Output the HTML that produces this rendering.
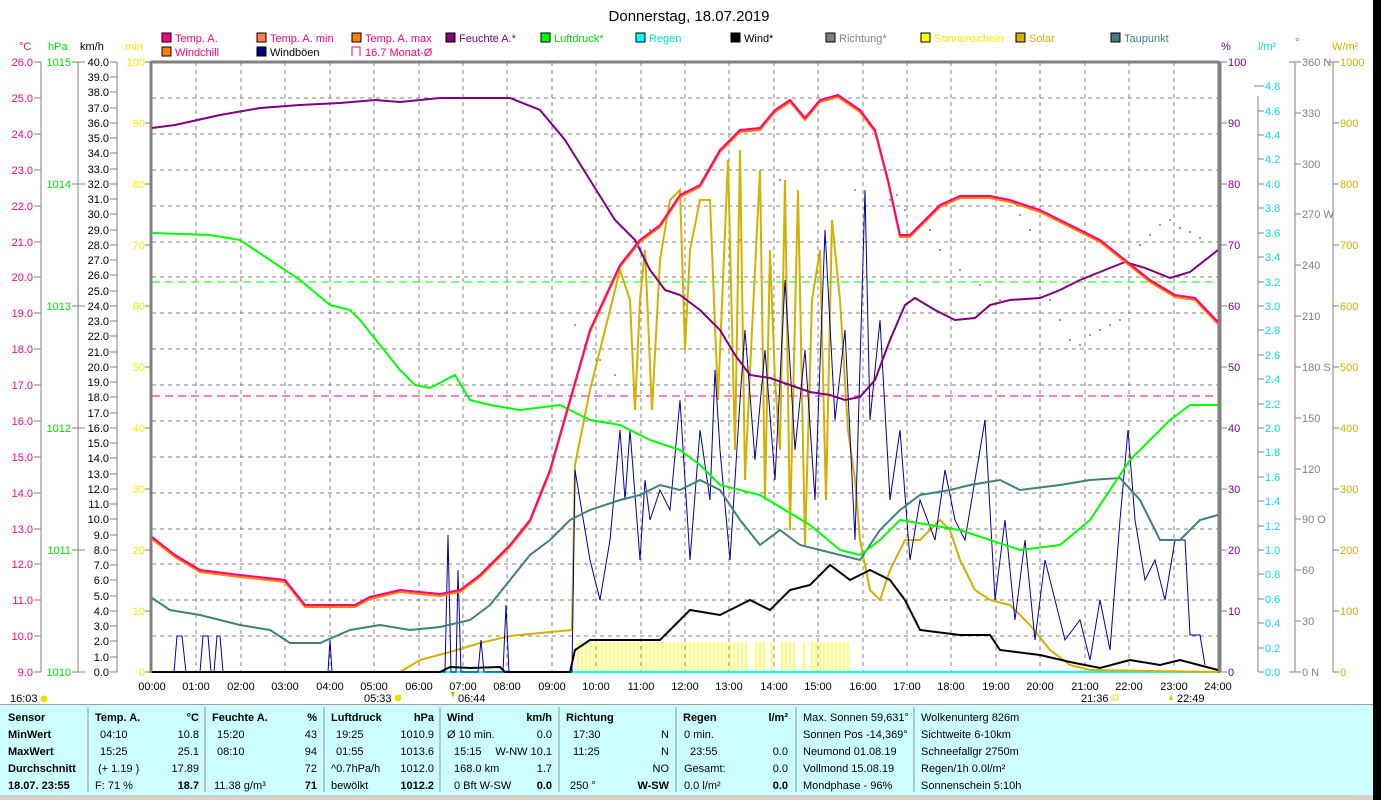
<!DOCTYPE html>
<html><head><meta charset="utf-8"><style>
html,body{margin:0;padding:0;background:#fff;}
svg{display:block;font-family:"Liberation Sans",sans-serif;}
</style></head><body>
<svg width="1381" height="800" viewBox="0 0 1381 800" xmlns="http://www.w3.org/2000/svg">
<rect width="1381" height="800" fill="#fff"/>
<rect x="1373" y="0" width="8" height="800" fill="#000"/>
<text x="689" y="21" font-size="15" text-anchor="middle" fill="#000">Donnerstag, 18.07.2019</text>
<!-- legend -->
<g font-size="11">
<rect x="162" y="33" width="9" height="9" fill="#ff0080" stroke="#000"/><text x="175" y="42" fill="#ff0080">Temp. A.</text>
<rect x="162" y="47" width="9" height="9" fill="#ff8000" stroke="#000"/><text x="175" y="56" fill="#ff0080">Windchill</text>
<rect x="257" y="33" width="9" height="9" fill="#ff8040" stroke="#000"/><text x="270" y="42" fill="#ff0080">Temp. A. min</text>
<rect x="257" y="47" width="9" height="9" fill="#000080" stroke="#000"/><text x="270" y="56" fill="#000">Windböen</text>
<rect x="352" y="33" width="9" height="9" fill="#ff8000" stroke="#000"/><text x="365" y="42" fill="#ff0080">Temp. A. max</text>
<path d="M352 56V47h8v9" fill="none" stroke="#ff0080"/><text x="365" y="56" fill="#ff0080">16.7 Monat-Ø</text>
<rect x="446" y="33" width="9" height="9" fill="#800080" stroke="#000"/><text x="459" y="42" fill="#800080">Feuchte A.*</text>
<rect x="541" y="33" width="9" height="9" fill="#00ff00" stroke="#000"/><text x="554" y="42" fill="#00dd00">Luftdruck*</text>
<rect x="636" y="33" width="9" height="9" fill="#00ffff" stroke="#000"/><text x="649" y="42" fill="#00e0e0">Regen</text>
<rect x="731" y="33" width="9" height="9" fill="#000" stroke="#000"/><text x="744" y="42" fill="#000">Wind*</text>
<rect x="826" y="33" width="9" height="9" fill="#808080" stroke="#000"/><text x="839" y="42" fill="#808080">Richtung*</text>
<rect x="921" y="33" width="9" height="9" fill="#ffff00" stroke="#000"/><text x="934" y="42" fill="#f0f000">Sonnenschein</text>
<rect x="1016" y="33" width="9" height="9" fill="#d4b000" stroke="#000"/><text x="1029" y="42" fill="#d4b000">Solar</text>
<rect x="1111" y="33" width="9" height="9" fill="#408080" stroke="#000"/><text x="1124" y="42" fill="#408080">Taupunkt</text>
</g>
<!-- unit labels -->
<g font-size="11">
<text x="19" y="50" fill="#ff0080">°C</text><text x="48" y="50" fill="#00dd00">hPa</text><text x="80" y="50" fill="#000">km/h</text><text x="125" y="50" fill="#f0f000">min</text>
<text x="1221" y="50" fill="#800080">%</text><text x="1258" y="50" fill="#00e0e0">l/m²</text><text x="1295" y="46" fill="#808080">°</text><text x="1332" y="50" fill="#d4b000">W/m²</text>
</g>
<!-- grid -->
<g stroke="#808080" stroke-dasharray="4,4" stroke-width="1">
<path d="M196 62V672M241 62V672M285 62V672M330 62V672M374 62V672M419 62V672M463 62V672M507 62V672M552 62V672M596 62V672M641 62V672M685 62V672M729 62V672M774 62V672M818 62V672M863 62V672M907 62V672M951 62V672M996 62V672M1040 62V672M1085 62V672M1129 62V672M1174 62V672"/>
<path d="M152 98H1218M152 134H1218M152 170H1218M152 206H1218M152 242H1218M152 277H1218M152 313H1218M152 349H1218M152 385H1218M152 421H1218M152 457H1218M152 493H1218M152 529H1218M152 564H1218M152 600H1218M152 636H1218"/>
</g>
<path d="M151 62H1219M151 61V673M1219 61V673" stroke="#808080" stroke-width="3" fill="none"/>
<!-- left axes -->
<g stroke="#808080" fill="none">
<path d="M41 62V672M78 62V672M117 62V672"/>
<path d="M34 62H41M34 98H41M34 134H41M34 170H41M34 206H41M34 242H41M34 277H41M34 313H41M34 349H41M34 385H41M34 421H41M34 457H41M34 493H41M34 529H41M34 564H41M34 600H41M34 636H41M34 672H41"/>
<path d="M72 62H85M72 184H85M72 306H85M72 428H85M72 550H85M72 672H85"/>
<path d="M110 62H117M110 77H117M110 92H117M110 108H117M110 123H117M110 138H117M110 153H117M110 169H117M110 184H117M110 199H117M110 214H117M110 230H117M110 245H117M110 260H117M110 275H117M110 291H117M110 306H117M110 321H117M110 336H117M110 352H117M110 367H117M110 382H117M110 397H117M110 413H117M110 428H117M110 443H117M110 458H117M110 474H117M110 489H117M110 504H117M110 519H117M110 535H117M110 550H117M110 565H117M110 580H117M110 596H117M110 611H117M110 626H117M110 641H117M110 657H117M110 672H117"/>
<path d="M145 62H151M145 123H151M145 184H151M145 245H151M145 306H151M145 367H151M145 428H151M145 489H151M145 550H151M145 611H151M145 672H151"/>
</g>
<g font-size="11" fill="#ff0080" text-anchor="end">
<text x="33" y="66">26.0</text><text x="33" y="102">25.0</text><text x="33" y="138">24.0</text><text x="33" y="174">23.0</text><text x="33" y="210">22.0</text><text x="33" y="246">21.0</text><text x="33" y="281">20.0</text><text x="33" y="317">19.0</text><text x="33" y="353">18.0</text><text x="33" y="389">17.0</text><text x="33" y="425">16.0</text><text x="33" y="461">15.0</text><text x="33" y="497">14.0</text><text x="33" y="533">13.0</text><text x="33" y="568">12.0</text><text x="33" y="604">11.0</text><text x="33" y="640">10.0</text><text x="33" y="676">9.0</text>
</g>
<g font-size="11" fill="#00dd00" text-anchor="end">
<text x="71" y="66">1015</text><text x="71" y="188">1014</text><text x="71" y="310">1013</text><text x="71" y="432">1012</text><text x="71" y="554">1011</text><text x="71" y="676">1010</text>
</g>
<g font-size="11" fill="#000" text-anchor="end">
<text x="109" y="66">40.0</text><text x="109" y="81">39.0</text><text x="109" y="96">38.0</text><text x="109" y="112">37.0</text><text x="109" y="127">36.0</text><text x="109" y="142">35.0</text><text x="109" y="157">34.0</text><text x="109" y="173">33.0</text><text x="109" y="188">32.0</text><text x="109" y="203">31.0</text><text x="109" y="218">30.0</text><text x="109" y="234">29.0</text><text x="109" y="249">28.0</text><text x="109" y="264">27.0</text><text x="109" y="279">26.0</text><text x="109" y="295">25.0</text><text x="109" y="310">24.0</text><text x="109" y="325">23.0</text><text x="109" y="340">22.0</text><text x="109" y="356">21.0</text><text x="109" y="371">20.0</text><text x="109" y="386">19.0</text><text x="109" y="401">18.0</text><text x="109" y="417">17.0</text><text x="109" y="432">16.0</text><text x="109" y="447">15.0</text><text x="109" y="462">14.0</text><text x="109" y="478">13.0</text><text x="109" y="493">12.0</text><text x="109" y="508">11.0</text><text x="109" y="523">10.0</text><text x="109" y="539">9.0</text><text x="109" y="554">8.0</text><text x="109" y="569">7.0</text><text x="109" y="584">6.0</text><text x="109" y="600">5.0</text><text x="109" y="615">4.0</text><text x="109" y="630">3.0</text><text x="109" y="645">2.0</text><text x="109" y="661">1.0</text><text x="109" y="676">0.0</text>
</g>
<g font-size="11" fill="#f0f000" text-anchor="end">
<text x="145" y="66">100</text><text x="145" y="127">90</text><text x="145" y="188">80</text><text x="145" y="249">70</text><text x="145" y="310">60</text><text x="145" y="371">50</text><text x="145" y="432">40</text><text x="145" y="493">30</text><text x="145" y="554">20</text><text x="145" y="615">10</text><text x="145" y="676">0</text>
</g>
<!-- right axes -->
<g stroke="#808080" fill="none">
<path d="M1221 62V672M1258 96V672M1295 62V672M1333 62V672"/>
<path d="M1221 62H1227M1221 123H1227M1221 184H1227M1221 245H1227M1221 306H1227M1221 367H1227M1221 428H1227M1221 489H1227M1221 550H1227M1221 611H1227M1221 672H1227"/>
<path d="M1254 86H1264M1258 111H1264M1258 135H1264M1258 159H1264M1258 184H1264M1258 208H1264M1258 233H1264M1258 257H1264M1258 282H1264M1258 306H1264M1258 330H1264M1258 355H1264M1258 379H1264M1258 404H1264M1258 428H1264M1258 452H1264M1258 477H1264M1258 501H1264M1258 526H1264M1258 550H1264M1258 574H1264M1258 599H1264M1258 623H1264M1258 648H1264M1258 672H1264"/>
<path d="M1289 62H1301M1295 113H1301M1295 164H1301M1295 214H1301M1295 265H1301M1295 316H1301M1295 367H1301M1295 418H1301M1295 469H1301M1295 519H1301M1295 570H1301M1295 621H1301M1289 672H1301"/>
<path d="M1327 62H1339M1333 123H1339M1333 184H1339M1333 245H1339M1333 306H1339M1333 367H1339M1333 428H1339M1333 489H1339M1333 550H1339M1333 611H1339M1333 672H1339"/>
</g>
<g font-size="11" fill="#800080"><text x="1228" y="66">100</text><text x="1228" y="127">90</text><text x="1228" y="188">80</text><text x="1228" y="249">70</text><text x="1228" y="310">60</text><text x="1228" y="371">50</text><text x="1228" y="432">40</text><text x="1228" y="493">30</text><text x="1228" y="554">20</text><text x="1228" y="615">10</text><text x="1228" y="676">0</text></g>
<g font-size="11" fill="#00e0e0"><text x="1265" y="90">4.8</text><text x="1265" y="115">4.6</text><text x="1265" y="139">4.4</text><text x="1265" y="163">4.2</text><text x="1265" y="188">4.0</text><text x="1265" y="212">3.8</text><text x="1265" y="237">3.6</text><text x="1265" y="261">3.4</text><text x="1265" y="286">3.2</text><text x="1265" y="310">3.0</text><text x="1265" y="334">2.8</text><text x="1265" y="359">2.6</text><text x="1265" y="383">2.4</text><text x="1265" y="408">2.2</text><text x="1265" y="432">2.0</text><text x="1265" y="456">1.8</text><text x="1265" y="481">1.6</text><text x="1265" y="505">1.4</text><text x="1265" y="530">1.2</text><text x="1265" y="554">1.0</text><text x="1265" y="578">0.8</text><text x="1265" y="603">0.6</text><text x="1265" y="627">0.4</text><text x="1265" y="652">0.2</text><text x="1265" y="676">0.0</text></g>
<g font-size="11" fill="#808080"><text x="1302" y="66">360 N</text><text x="1302" y="117">330</text><text x="1302" y="168">300</text><text x="1302" y="218">270 W</text><text x="1302" y="269">240</text><text x="1302" y="320">210</text><text x="1302" y="371">180 S</text><text x="1302" y="422">150</text><text x="1302" y="473">120</text><text x="1302" y="523">90 O</text><text x="1302" y="574">60</text><text x="1302" y="625">30</text><text x="1302" y="676">0 N</text></g>
<g font-size="11" fill="#d4b000"><text x="1340" y="66">1000</text><text x="1340" y="127">900</text><text x="1340" y="188">800</text><text x="1340" y="249">700</text><text x="1340" y="310">600</text><text x="1340" y="371">500</text><text x="1340" y="432">400</text><text x="1340" y="493">300</text><text x="1340" y="554">200</text><text x="1340" y="615">100</text><text x="1340" y="676">0</text></g>
<!-- x labels -->
<g font-size="11" fill="#000" text-anchor="middle">
<text x="152" y="690">00:00</text><text x="196" y="690">01:00</text><text x="241" y="690">02:00</text><text x="285" y="690">03:00</text><text x="330" y="690">04:00</text><text x="374" y="690">05:00</text><text x="419" y="690">06:00</text><text x="463" y="690">07:00</text><text x="507" y="690">08:00</text><text x="552" y="690">09:00</text><text x="596" y="690">10:00</text><text x="641" y="690">11:00</text><text x="685" y="690">12:00</text><text x="729" y="690">13:00</text><text x="774" y="690">14:00</text><text x="818" y="690">15:00</text><text x="863" y="690">16:00</text><text x="907" y="690">17:00</text><text x="951" y="690">18:00</text><text x="996" y="690">19:00</text><text x="1040" y="690">20:00</text><text x="1085" y="690">21:00</text><text x="1129" y="690">22:00</text><text x="1174" y="690">23:00</text><text x="1218" y="690">24:00</text>
</g>
<g font-size="11" fill="#000">
<text x="10" y="702">16:03</text><circle cx="44" cy="699" r="3.5" fill="#f0e000"/>
<text x="364" y="702">05:33</text><circle cx="398" cy="698" r="3.5" fill="#f0e000"/>
<text x="458" y="702">06:44</text><path d="M451 692l2 6 2-6z" fill="#d4b000"/>
<text x="1081" y="702">21:36</text><rect x="1113" y="695" width="5" height="5" fill="none" stroke="#f0e000"/>
<text x="1177" y="702">22:49</text><path d="M1169 700l2-6 2 6z" fill="#f0c000"/>
</g>
<!-- reference lines -->
<path d="M152 396H1218" stroke="#ff0080" stroke-dasharray="8,5"/>
<path d="M152 282H1218" stroke="#00ff00" stroke-dasharray="8,5"/>
<!-- sunshine bars -->
<g stroke="#ffff00" stroke-width="1.2">
<path d="M578 642V672M582 642V672M586 642V672M590 642V672M594 642V672M598 642V672M602 642V672M606 642V672M610 642V672M614 642V672M618 642V672M622 642V672M626 642V672M630 642V672M634 642V672M638 642V672M642 642V672M646 642V672M650 642V672M654 642V672M658 642V672M662 642V672M666 642V672M670 642V672M674 642V672M678 642V672M682 642V672M686 642V672M690 642V672M694 642V672M698 642V672M702 642V672M706 642V672M710 642V672M714 642V672M718 642V672M722 642V672M726 642V672M730 642V672M734 642V672M738 642V672M742 642V672M746 642V672M756 642V672M760 642V672M764 642V672M772 642V672M782 642V672M786 642V672M790 642V672M794 642V672M804 642V672M812 642V672M816 642V672M820 642V672M824 642V672M828 642V672M832 642V672M836 642V672M840 642V672M844 642V672M848 642V672"/>
</g>
<!-- rain baseline -->
<path d="M152 672H1218" stroke="#00ffff" stroke-width="2"/>
<!-- direction dots -->
<g fill="#808080">
<circle cx="575" cy="325" r="1"/><circle cx="585" cy="345" r="1"/><circle cx="600" cy="360" r="1"/><circle cx="615" cy="375" r="1"/><circle cx="640" cy="250" r="1"/><circle cx="650" cy="230" r="1"/><circle cx="660" cy="225" r="1"/><circle cx="740" cy="240" r="1"/><circle cx="760" cy="200" r="1"/><circle cx="780" cy="180" r="1"/><circle cx="855" cy="190" r="1"/><circle cx="890" cy="200" r="1"/><circle cx="897" cy="195" r="1"/><circle cx="905" cy="210" r="1"/><circle cx="940" cy="250" r="1"/><circle cx="960" cy="270" r="1"/><circle cx="1020" cy="215" r="1"/><circle cx="1030" cy="230" r="1"/><circle cx="1050" cy="300" r="1"/><circle cx="1060" cy="320" r="1"/><circle cx="1070" cy="340" r="1"/><circle cx="1080" cy="345" r="1"/><circle cx="1090" cy="335" r="1"/><circle cx="1100" cy="330" r="1"/><circle cx="1110" cy="325" r="1"/><circle cx="1120" cy="320" r="1"/><circle cx="1140" cy="245" r="1"/><circle cx="1150" cy="235" r="1"/><circle cx="1160" cy="225" r="1"/><circle cx="1170" cy="220" r="1"/><circle cx="1180" cy="228" r="1"/><circle cx="1190" cy="232" r="1"/><circle cx="1200" cy="238" r="1"/><circle cx="930" cy="230" r="1"/><circle cx="980" cy="285" r="1"/><circle cx="1000" cy="300" r="1"/>
</g>
<!-- solar -->
<polyline fill="none" stroke="#d4b000" stroke-width="2" points="400,672 420,660 450,652 480,643 510,636 540,633 572,630 575,465 590,390 600,350 610,310 620,270 630,300 635,410 640,300 645,250 652,410 660,260 670,200 680,190 685,350 690,250 700,200 710,200 718,400 728,160 735,450 740,150 745,480 752,330 760,170 765,500 770,250 775,380 780,450 785,180 790,530 798,190 805,545 812,300 820,250 826,500 832,220 840,300 848,430 855,480 860,540 870,590 880,600 890,570 905,540 920,540 940,520 950,530 960,560 975,590 990,600 1010,605 1030,625 1050,650 1070,665 1090,670 1218,672"/>
<!-- windböen -->
<polyline fill="none" stroke="#0000a0" stroke-width="1" points="152,672 174,672 177,636 182,636 186,672 200,672 203,636 208,636 211,672 214,672 217,636 220,636 223,672 328,672 330,640 332,672 445,672 448,535 451,672 456,672 458,570 461,672 478,672 481,640 484,672 503,672 506,605 509,672 572,672 575,470 590,560 600,600 610,540 620,430 625,500 630,430 640,560 645,480 650,520 660,490 670,510 680,400 690,560 700,430 710,500 715,370 720,450 730,560 740,400 745,330 755,460 765,350 775,480 785,280 795,450 805,350 815,500 825,230 835,420 845,330 855,540 865,190 870,420 880,320 890,500 900,430 910,560 920,500 935,540 945,470 955,520 965,540 975,480 985,420 995,600 1005,520 1015,620 1025,540 1035,640 1045,560 1055,600 1065,640 1080,620 1090,660 1100,600 1110,650 1120,520 1128,430 1135,520 1145,580 1155,560 1165,600 1175,540 1185,540 1190,635 1200,635 1205,665"/>
<!-- wind -->
<polyline fill="none" stroke="#000" stroke-width="2" points="152,672 440,672 450,667 470,668 500,667 505,672 570,672 575,650 590,640 620,640 660,640 670,630 690,610 720,615 750,600 770,610 790,590 810,585 830,565 850,580 870,570 890,580 905,600 920,630 960,635 990,635 1000,650 1040,655 1070,662 1100,668 1130,660 1160,665 1180,660 1218,670"/>
<!-- taupunkt -->
<polyline fill="none" stroke="#408080" stroke-width="2" points="152,598 170,610 200,615 240,625 270,630 290,643 320,643 350,630 380,625 410,630 440,627 470,620 490,605 510,580 530,555 550,540 570,520 590,510 620,500 640,495 660,485 680,490 700,480 720,490 740,520 760,545 780,530 800,545 840,555 860,560 880,530 900,510 920,495 950,490 970,485 1000,480 1020,490 1060,485 1090,480 1120,478 1140,500 1160,540 1180,540 1200,520 1218,515"/>
<!-- pressure -->
<polyline fill="none" stroke="#00ff00" stroke-width="2" points="152,233 210,235 240,240 270,260 300,280 330,305 350,310 360,320 380,345 400,370 415,385 430,388 455,375 470,400 490,405 520,410 560,405 590,420 620,425 650,440 680,450 700,465 720,485 760,495 810,525 840,550 860,555 880,540 900,520 930,525 960,530 990,540 1020,550 1060,545 1090,520 1110,490 1130,460 1150,440 1170,420 1190,405 1218,405"/>
<!-- humidity -->
<polyline fill="none" stroke="#800080" stroke-width="2" points="152,128 175,125 220,115 260,108 300,105 340,103 375,100 400,102 440,98 510,98 540,110 565,140 590,180 615,220 635,240 650,270 665,290 680,295 700,310 720,330 735,355 750,375 770,378 790,385 810,392 830,395 845,400 860,397 875,380 890,340 905,305 915,298 935,310 955,320 975,318 990,305 1010,300 1040,298 1060,290 1080,280 1110,268 1125,262 1145,268 1170,278 1190,272 1218,250"/>
<!-- temp -->
<polyline fill="none" stroke="#ff8000" stroke-width="2" points="152,539 175,557 200,572 240,577 285,582 305,607 355,607 370,599 400,592 440,596 460,592 480,577 510,547 530,522 550,472 570,402 590,332 620,267 640,242 660,227 680,197 700,187 720,152 740,132 760,130 775,112 790,102 805,120 820,102 838,97 860,112 875,132 888,182 900,237 910,237 925,222 940,207 960,198 990,198 1010,202 1040,212 1070,227 1100,242 1125,262 1150,282 1175,297 1195,300 1218,324"/>
<polyline fill="none" stroke="#ff0080" stroke-width="2" points="152,537 175,555 200,570 240,575 285,580 305,605 355,605 370,597 400,590 440,594 460,590 480,575 510,545 530,520 550,470 570,400 590,330 620,265 640,240 660,225 680,195 700,185 720,150 740,130 760,128 775,110 790,100 805,118 820,100 838,95 860,110 875,130 888,180 900,235 910,235 925,220 940,205 960,196 990,196 1010,200 1040,210 1070,225 1100,240 1125,260 1150,280 1175,295 1195,298 1218,322"/>
<!-- bottom panel -->
<rect x="0" y="704" width="1373" height="91" fill="#ccffff"/>
<rect x="0" y="704" width="1373" height="1" fill="#a0a0a0"/>
<rect x="0" y="795" width="1373" height="5" fill="#d4d0c8"/>
<g stroke="#909090"><path d="M88 707V792M205 707V792M324 707V792M440 707V792M559 707V792M676 707V792M796 707V792M914 707V792"/></g>
<g font-size="11" fill="#000">
<g font-weight="bold"><text x="8" y="721">Sensor</text><text x="8" y="738">MinWert</text><text x="8" y="755">MaxWert</text><text x="8" y="772">Durchschnitt</text><text x="8" y="789">18.07. 23:55</text>
<text x="95" y="721">Temp. A.</text><text x="212" y="721">Feuchte A.</text><text x="331" y="721">Luftdruck</text><text x="447" y="721">Wind</text><text x="566" y="721">Richtung</text><text x="683" y="721">Regen</text></g>
<g text-anchor="end" font-weight="bold"><text x="199" y="721">°C</text><text x="317" y="721">%</text><text x="434" y="721">hPa</text><text x="552" y="721">km/h</text><text x="788" y="721">l/m²</text>
<text x="199" y="789">18.7</text><text x="317" y="789">71</text><text x="434" y="789">1012.2</text><text x="552" y="789">0.0</text><text x="669" y="789">W-SW</text><text x="788" y="789">0.0</text></g>
<text x="100" y="738">04:10</text><text x="100" y="755">15:25</text><text x="98" y="772">(+ 1.19 )</text><text x="95" y="789">F: 71 %</text>
<g text-anchor="end"><text x="199" y="738">10.8</text><text x="199" y="755">25.1</text><text x="199" y="772">17.89</text>
<text x="317" y="738">43</text><text x="317" y="755">94</text><text x="317" y="772">72</text>
<text x="434" y="738">1010.9</text><text x="434" y="755">1013.6</text><text x="434" y="772">1012.0</text>
<text x="552" y="738">0.0</text><text x="552" y="755">W-NW 10.1</text><text x="552" y="772">1.7</text>
<text x="669" y="738">N</text><text x="669" y="755">N</text><text x="669" y="772">NO</text>
<text x="788" y="755">0.0</text><text x="788" y="772">0.0</text></g>
<text x="217" y="738">15:20</text><text x="217" y="755">08:10</text><text x="214" y="789">11.38 g/m³</text>
<text x="336" y="738">19:25</text><text x="336" y="755">01:55</text><text x="331" y="772">^0.7hPa/h</text><text x="331" y="789">bewölkt</text>
<text x="447" y="738">Ø 10 min.</text><text x="454" y="755">15:15</text><text x="454" y="772">168.0 km</text><text x="454" y="789">0 Bft W-SW</text>
<text x="573" y="738">17:30</text><text x="573" y="755">11:25</text><text x="570" y="789">250 °</text>
<text x="684" y="738">0 min.</text><text x="690" y="755">23:55</text><text x="684" y="772">Gesamt:</text><text x="684" y="789">0.0 l/m²</text>
<text x="803" y="721">Max. Sonnen 59,631°</text><text x="803" y="738">Sonnen Pos  -14,369°</text><text x="803" y="755">Neumond    01.08.19</text><text x="803" y="772">Vollmond    15.08.19</text><text x="803" y="789">Mondphase        - 96%</text>
<text x="921" y="721">Wolkenunterg   826m</text><text x="921" y="738">Sichtweite     6-10km</text><text x="921" y="755">Schneefallgr   2750m</text><text x="921" y="772">Regen/1h     0.0l/m²</text><text x="921" y="789">Sonnenschein  5:10h</text>
</g>
</svg>
</body></html>
